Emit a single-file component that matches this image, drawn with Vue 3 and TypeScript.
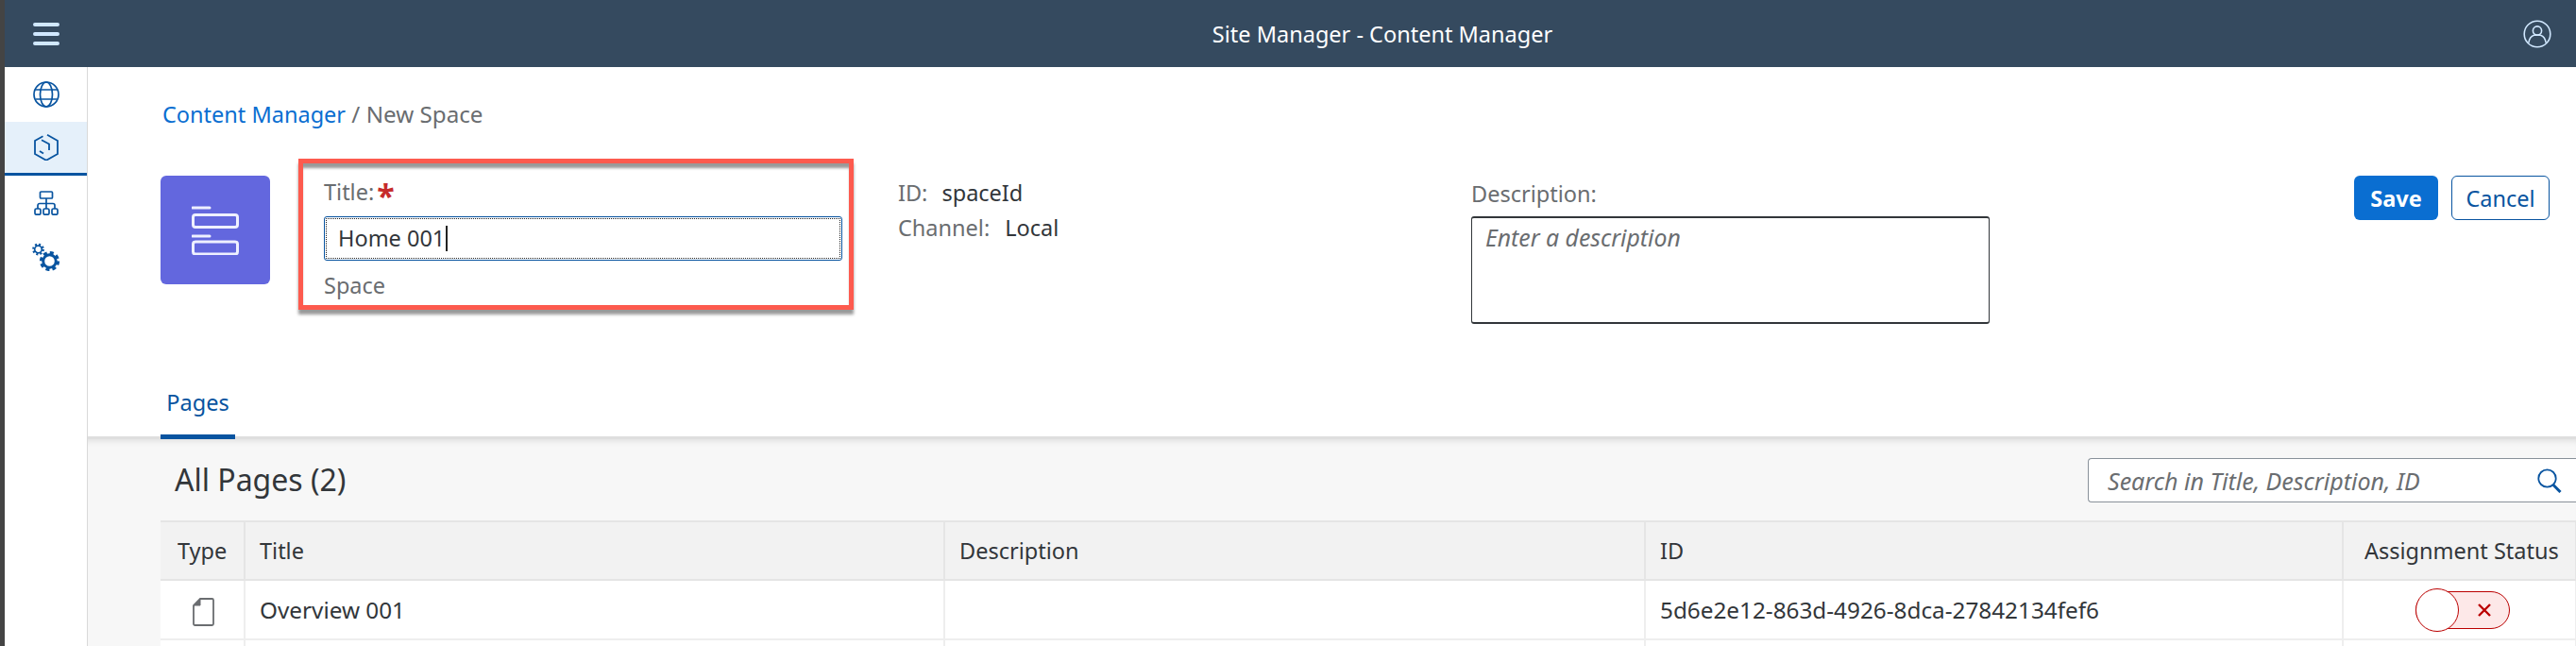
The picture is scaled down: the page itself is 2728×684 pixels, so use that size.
<script setup lang="ts">
interface PageRow {
  title: string;
  description: string;
  id: string;
  assigned: boolean;
}

const rows: PageRow[] = [
  { title: "Overview 001", description: "", id: "5d6e2e12-863d-4926-8dca-27842134fef6", assigned: false },
  { title: "", description: "", id: "", assigned: false },
];
</script>

<template>
  <div class="page">
    <header class="shell">
      <button class="shell-menu" aria-label="Menu">
        <svg width="28" height="24" viewBox="0 0 28 24">
          <path d="M2 2h24M2 12h24M2 22h24" stroke="#d1e8ff" stroke-width="4" stroke-linecap="round" />
        </svg>
      </button>
      <div class="shell-title">Site Manager - Content Manager</div>
      <div class="shell-user">
        <svg width="30" height="30" viewBox="0 0 30 30" fill="none" stroke="#d1e8ff" stroke-width="1.6">
          <circle cx="15" cy="15" r="13.8" />
          <circle cx="15" cy="11.5" r="4.6" />
          <path d="M5.800 24.500c.6-4 2.200-7 5.700-8.200h7c3.500 1.200 5.100 4.200 5.700 8.200" />
        </svg>
      </div>
    </header>

    <div class="body">
      <nav class="side">
        <div class="side-item">
          <svg width="28" height="28" viewBox="0 0 28 28" fill="none" stroke="#0854a0" stroke-width="1.700">
            <circle cx="14" cy="14" r="13" />
            <ellipse cx="14" cy="14" rx="6.500" ry="13" />
            <path d="M2.500 9h23M2.500 19h23" />
          </svg>
        </div>
        <div class="side-item active">
          <svg width="26" height="28" viewBox="0 0 26 28" fill="none" stroke="#0854a0" stroke-width="1.800">
            <path d="M9.500 2.300 1 7v14l12 6.800L25 21V7L14 .8" />
            <path d="M8 6.300 16 10.500V17" />
            <path d="M6 18l4 2.500" />
          </svg>
        </div>
        <div class="side-item">
          <svg width="26" height="26" viewBox="0 0 26 26" fill="none" stroke="#0854a0" stroke-width="1.700">
            <rect x="6.500" y="1" width="13" height="7" rx="1" />
            <path d="M13 8v11M4 19v-3.500a2 2 0 0 1 2-2h14a2 2 0 0 1 2 2V19" />
            <rect x="1" y="19" width="6" height="6.200" rx="1.500" />
            <rect x="10" y="19" width="6" height="6.200" rx="1.500" />
            <rect x="19" y="19" width="6" height="6.200" rx="1.500" />
          </svg>
        </div>
        <div class="side-item">
          <svg width="29" height="30" viewBox="0 0 29 30" fill="none" stroke="#0854a0">
            <circle cx="6.500" cy="7" r="3.800" stroke-width="1.700" />
            <circle cx="6.500" cy="7" r="5.300" stroke-width="2.200" stroke-dasharray="2 2.160" />
            <circle cx="18.500" cy="19.500" r="6.800" stroke-width="3" />
            <circle cx="18.500" cy="19.500" r="9" stroke-width="3.200" stroke-dasharray="4 3.070" />
          </svg>
        </div>
      </nav>

      <main class="content">
        <div class="head">
          <div class="crumbs">
            <a class="crumb-link">Content Manager</a>
            <span class="crumb-rest"> / New Space</span>
          </div>

          <div class="form-row">
            <div class="tile">
              <svg width="50" height="52" viewBox="0 0 50 52" fill="none" stroke="#eef0ff" stroke-width="3">
                <path d="M1 2h18M1 32h18" stroke-linecap="round" />
                <rect x="1.500" y="9.500" width="47" height="13" rx="2.500" />
                <rect x="1.500" y="38" width="47" height="13" rx="2.500" />
              </svg>
            </div>

            <div class="title-box">
              <div class="field-label">Title:<span class="star">*</span></div>
              <div class="title-input">Home 001<span class="caret"></span></div>
              <div class="field-label sub">Space</div>
            </div>

            <div class="meta">
              <div><span class="field-label">ID:</span><span class="meta-id">spaceId</span></div>
              <div><span class="field-label">Channel:</span><span class="meta-channel">Local</span></div>
            </div>

            <div class="desc">
              <div class="field-label">Description:</div>
              <textarea class="desc-input" placeholder="Enter a description"></textarea>
            </div>

            <div class="actions">
              <button class="btn save">Save</button>
              <button class="btn cancel">Cancel</button>
            </div>
          </div>
        </div>

        <div class="tabs">
          <div class="tab">Pages</div>
        </div>

        <section class="list">
          <div class="toolbar">
            <h2 class="list-title">All Pages (2)</h2>
            <div class="search">
              <input class="search-input" placeholder="Search in Title, Description, ID" />
              <svg class="search-icon" width="26" height="26" viewBox="0 0 26 26" fill="none" stroke="#0854a0">
                <circle cx="10.500" cy="10.500" r="9.200" stroke-width="1.800" />
                <path d="M17 17.500l7.500 7.500" stroke-width="3" />
              </svg>
            </div>
          </div>

          <table class="pages">
            <colgroup>
              <col style="width: 89px" />
              <col style="width: 741px" />
              <col style="width: 742px" />
              <col style="width: 739px" />
              <col style="width: 247px" />
            </colgroup>
            <thead>
              <tr>
                <th>Type</th>
                <th>Title</th>
                <th>Description</th>
                <th>ID</th>
                <th>Assignment Status</th>
              </tr>
            </thead>
            <tbody>
              <tr v-for="(row, index) of rows" :key="index">
                <td class="type-cell">
                  <svg v-if="row.title" width="23" height="30" viewBox="0 0 23 30" fill="none" stroke="#6a6d70" stroke-width="1.800">
                    <path d="M8 1h12.500A1.500 1.500 0 0 1 22 2.500v25a1.500 1.500 0 0 1-1.500 1.500h-18A1.500 1.500 0 0 1 1 27.500V8z" />
                    <path d="M8 1v7H1" fill="#6a6d70" stroke-width="1" />
                  </svg>
                </td>
                <td>{{ row.title }}</td>
                <td>{{ row.description }}</td>
                <td>{{ row.id }}</td>
                <td class="status-cell">
                  <span v-if="row.title" class="toggle">
                    <span class="knob"></span>
                    <svg class="toggle-x" width="16" height="16" viewBox="0 0 16 16">
                      <path d="M2 2l12 12M14 2L2 14" stroke="#bb0000" stroke-width="2.400" />
                    </svg>
                  </span>
                </td>
              </tr>
            </tbody>
          </table>
        </section>
      </main>
    </div>
  </div>
</template>

<style>
body {
  margin: 0;
  background: #fff;
}
</style>

<style scoped>
.page {
  width: 2728px;
  height: 684px;
  box-sizing: border-box;
  border-left: 5px solid #444;
  display: flex;
  flex-direction: column;
  overflow: hidden;
  font-family: "Noto Sans", "Liberation Sans", sans-serif;
  font-size: 23.5px;
  line-height: 30px;
  color: #32363a;
}

.shell {
  flex: none;
  height: 71px;
  display: flex;
  align-items: center;
  background: #354a5f;
}

.shell-menu {
  width: 87px;
  height: 71px;
  padding: 0;
  border: 0;
  background: none;
  display: flex;
  align-items: center;
  justify-content: center;
}

.shell-title {
  flex: 1;
  padding-left: 164px;
  text-align: center;
  color: #fff;
}

.shell-user {
  width: 56px;
  display: flex;
  padding-top: 1px;
}

.body {
  flex: 1;
  display: flex;
  min-height: 0;
}

.side {
  flex: none;
  width: 87px;
  border-right: 1px solid #d9d9d9;
  display: flex;
  flex-direction: column;
}

.side-item {
  height: 57px;
  display: flex;
  align-items: center;
  justify-content: center;
}

.side-item:first-child {
  height: 58px;
}

.side-item.active {
  box-sizing: border-box;
  background: #e5f0fa;
  border-bottom: 3px solid #0854a0;
}

.content {
  flex: 1;
  min-width: 0;
  display: flex;
  flex-direction: column;
}

.head {
  padding: 35px 28px 0 77px;
}

.crumbs {
  padding-left: 2px;
}

.crumb-link {
  color: #0a6ed1;
}

.crumb-rest {
  font-size: 24.2px;
  color: #6a6d70;
}

.form-row {
  margin-top: 32px;
  padding-bottom: 57px;
  display: flex;
  align-items: flex-start;
}

.tile {
  flex: none;
  width: 116px;
  height: 115px;
  margin: 18px 30px 0 0;
  border-radius: 6px;
  background: #6367de;
  display: flex;
  align-items: center;
  justify-content: center;
}

.title-box {
  flex: none;
  width: 588px;
  height: 160px;
  box-sizing: border-box;
  padding: 15px 7px 0 22px;
  border: 5px solid #fd5a4e;
  box-shadow: 0 5px 3px rgba(0, 0, 0, 0.4), inset 0 6px 3px -1px rgba(0, 0, 0, 0.4);
}

.field-label {
  color: #6a6d70;
}

.field-label.sub {
  margin-top: 11px;
}

.star {
  margin-left: 3px;
  color: #c62b2b;
  font-weight: 700;
  font-size: 34px;
  line-height: 20px;
  vertical-align: -8px;
}

.title-input {
  margin-top: 11px;
  height: 47px;
  box-sizing: border-box;
  padding-left: 14px;
  border: 1px solid #0854a0;
  border-radius: 3px;
  outline: 1px dotted #222;
  outline-offset: -3px;
  line-height: 45px;
  display: flex;
}

.caret {
  width: 1.5px;
  height: 27px;
  margin: 9px 0 0 1px;
  background: #222;
}

.meta {
  flex: none;
  width: 607px;
  margin: 18px 0 0 47px;
  line-height: 37px;
}

.meta-id {
  margin-left: 15px;
}

.meta-channel {
  margin-left: 16px;
}

.desc {
  flex: none;
  width: 549px;
  margin-top: 22px;
}

.desc-input {
  display: block;
  width: 100%;
  height: 114px;
  margin-top: 9px;
  box-sizing: border-box;
  padding: 5px 14px;
  border: 1px solid #32363a;
  border-top-width: 2px;
  border-bottom-width: 2px;
  border-radius: 3px;
  resize: none;
  outline: none;
  font: inherit;
  font-size: 24.8px;
}

.desc-input::placeholder {
  color: #6a6d70;
  font-style: italic;
  opacity: 1;
}

.actions {
  margin: 18px 0 0 auto;
  display: flex;
  gap: 14px;
}

.btn {
  height: 47px;
  padding: 0;
  border-radius: 6px;
  font: inherit;
}

.save {
  width: 89px;
  border: 0;
  background: #0a6ed1;
  color: #fff;
  font-weight: 700;
}

.cancel {
  width: 104px;
  border: 1px solid #0854a0;
  background: #fff;
  color: #0854a0;
}

.tabs {
  flex: none;
  height: 65px;
  box-sizing: border-box;
  padding-left: 77px;
  border-bottom: 3px solid #dedede;
  display: flex;
}

.tab {
  width: 79px;
  height: 65px;
  box-sizing: border-box;
  padding-top: 11px;
  border-bottom: 5px solid #0854a0;
  text-align: center;
  color: #0854a0;
}

.list {
  flex: 1;
  min-height: 0;
  padding-left: 77px;
  background: #f7f7f7;
  box-shadow: inset 0 7px 6px -5px rgba(0, 0, 0, 0.1);
}

.toolbar {
  height: 86px;
  display: flex;
  align-items: flex-start;
  justify-content: space-between;
}

.list-title {
  margin: 23px 0 0 15px;
  font-size: 32px;
  font-weight: 400;
  line-height: 40px;
}

.search {
  width: 517px;
  height: 47px;
  margin-top: 20px;
  box-sizing: border-box;
  padding: 0 15px 0 20px;
  border: 1px solid #89919a;
  border-right: 0;
  border-radius: 4px 0 0 4px;
  background: #fff;
  display: flex;
  align-items: center;
}

.search-input {
  flex: 1;
  min-width: 0;
  padding: 0;
  border: 0;
  outline: none;
  background: none;
  font: inherit;
  font-size: 25px;
}

.search-input::placeholder {
  color: #6a6d70;
  font-style: italic;
  opacity: 1;
}

.search-icon {
  flex: none;
}

.pages {
  width: 2558px;
  table-layout: fixed;
  border-collapse: collapse;
  background: #fff;
}

.pages th {
  height: 60px;
  padding: 0 0 0 15px;
  background: #f2f2f2;
  border: 2px solid #e5e5e5;
  border-left: 0;
  font-weight: 400;
  text-align: left;
}

.pages th:first-child {
  padding-left: 18px;
}

.pages th:last-child {
  padding-left: 22px;
}

.pages td {
  height: 63px;
  padding: 0 0 0 15px;
  box-sizing: border-box;
  border: 2px solid #eeeeee;
  border-left: 0;
  font-size: 24.3px;
}

.pages .type-cell {
  padding: 5px 0 0 34px;
  line-height: 0;
}

.pages .status-cell {
  padding: 0 0 0 76px;
}

.toggle {
  position: relative;
  display: block;
  width: 100px;
  height: 40px;
  box-sizing: border-box;
  border: 1px solid #bb0000;
  border-radius: 20px;
  background: #fde8e8;
}

.knob {
  position: absolute;
  left: -1px;
  top: -4px;
  width: 46px;
  height: 46px;
  box-sizing: border-box;
  border: 1px solid #bb0000;
  border-radius: 50%;
  background: #fff;
}

.toggle-x {
  position: absolute;
  left: 64px;
  top: 11px;
}
</style>
